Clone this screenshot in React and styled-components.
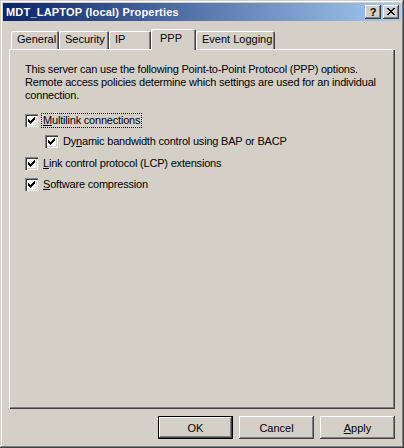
import React from "react";
import styled, { createGlobalStyle, css } from "styled-components";

const Global = createGlobalStyle`
  html, body { margin: 0; padding: 0; background: #D4D0C8; }
  body { font-family: "Liberation Sans", Arial, sans-serif; font-size: 11px; color: #000; }
  * { box-sizing: border-box; }
`;

const raised = css`
  box-shadow: inset -1px -1px 0 #404040, inset 1px 1px 0 #FFFFFF, inset -2px -2px 0 #808080;
`;

const Window = styled.div`
  width: 404px;
  height: 448px;
  background: #D4D0C8;
  padding: 3px;
  display: flex;
  flex-direction: column;
  box-shadow: inset -1px -1px 0 #404040, inset 1px 1px 0 #D4D0C8,
    inset -2px -2px 0 #808080, inset 2px 2px 0 #FFFFFF;
`;

const TitleBar = styled.div`
  height: 18px;
  display: flex;
  align-items: center;
  padding: 0 2px 0 2px;
  background: linear-gradient(to right, #0A246A, #A6CAF0);
`;

const Title = styled.div`
  flex: 1;
  color: #fff;
  font-weight: bold;
  font-size: 11px;
  letter-spacing: 0.2px;
  padding-left: 1px;
`;

const TitleButton = styled.div`
  width: 16px;
  height: 14px;
  background: #D4D0C8;
  ${raised};
  display: flex;
  align-items: center;
  justify-content: center;
  margin-left: ${(p) => p.$gap || 0}px;
  font-weight: bold;
  font-size: 11px;
  line-height: 14px;
  padding-bottom: 1px;
`;

const Body = styled.div`
  flex: 1;
  display: flex;
  flex-direction: column;
  padding: 8px 6px 0 6px;
`;

const TabRow = styled.div`
  display: flex;
  align-items: flex-end;
  height: 20px;
  padding-left: 2px;
  position: relative;
  z-index: 1;
`;

const Tab = styled.div`
  width: ${(p) => p.$w}px;
  height: ${(p) => (p.$active ? 21 : 18)}px;
  margin-bottom: ${(p) => (p.$active ? -1 : 0)}px;
  background: #D4D0C8;
  border-radius: 2px 2px 0 0;
  box-shadow: inset 1px 1px 0 #FFFFFF, inset -1px 0 0 #404040, inset -2px 0 0 #808080;
  padding: ${(p) => (p.$active ? "3px 0 0 9px" : "2px 0 0 6px")};
  line-height: 13px;
  white-space: nowrap;
`;

const Panel = styled.div`
  height: 360px;
  background: #D4D0C8;
  box-shadow: inset 1px 1px 0 #FFFFFF, inset -1px -1px 0 #404040, inset -2px -2px 0 #808080;
  padding: 14px 14px 0 16px;
  display: flex;
  flex-direction: column;
  letter-spacing: -0.2px;
`;

const Intro = styled.p`
  margin: 0 0 10px 0;
  line-height: 13px;
  width: 352px;
`;

const CheckRow = styled.div`
  display: flex;
  align-items: center;
  height: 13px;
  margin-top: ${(p) => p.$mt || 0}px;
  padding-left: ${(p) => p.$indent || 0}px;
`;

const Box = styled.div`
  width: 13px;
  height: 13px;
  background: #fff;
  box-shadow: inset 1px 1px 0 #808080, inset 2px 2px 0 #404040, inset -1px -1px 0 #FFFFFF, inset -2px -2px 0 #D4D0C8;
  display: flex;
  align-items: center;
  justify-content: center;
  flex: none;
`;

const Label = styled.span`
  margin-left: 4px;
  padding: 0 1px;
  line-height: 13px;
  outline: ${(p) => (p.$focus ? "1px dotted #000" : "none")};
  outline-offset: 0px;
  white-space: nowrap;
`;

const U = styled.span`
  text-decoration: underline;
`;

const Footer = styled.div`
  display: flex;
  justify-content: flex-end;
  gap: 6px;
  padding: 7px 0 0 0;
`;

const Button = styled.div`
  width: 75px;
  height: 23px;
  display: flex;
  align-items: center;
  justify-content: center;
  background: #D4D0C8;
  ${(p) =>
    p.$default
      ? css`
          box-shadow: inset 0 0 0 1px #000, inset -2px -2px 0 #404040, inset 2px 2px 0 #FFFFFF,
            inset -3px -3px 0 #808080;
        `
      : raised}
`;

const Check = () => (
  <svg width="7" height="7" viewBox="0 0 7 7" shapeRendering="crispEdges">
    <path
      d="M0 2h1v3h-1z M1 3h1v3h-1z M2 4h1v3h-1z M3 3h1v3h-1z M4 2h1v3h-1z M5 1h1v3h-1z M6 0h1v3h-1z"
      fill="#000"
    />
  </svg>
);

const CloseGlyph = () => (
  <svg width="8" height="7" viewBox="0 0 8 7" shapeRendering="crispEdges">
    <path
      d="M0 0h2v1h-2z M1 1h2v1h-2z M2 2h2v1h-2z M3 3h2v1h-2z M2 4h2v1h-2z M1 5h2v1h-2z M0 6h2v1h-2z M6 0h2v1h-2z M5 1h2v1h-2z M4 2h2v1h-2z M4 4h2v1h-2z M5 5h2v1h-2z M6 6h2v1h-2z"
      fill="#000"
    />
  </svg>
);

const tabs = [
  { label: "General", w: 48 },
  { label: "Security", w: 50 },
  { label: "IP", w: 42 },
  { label: "PPP", w: 45, active: true },
  { label: "Event Logging", w: 79 },
];

export default function App() {
  return (
    <>
      <Global />
      <Window>
        <TitleBar>
          <Title>MDT_LAPTOP (local) Properties</Title>
          <TitleButton>?</TitleButton>
          <TitleButton $gap={2}>
            <CloseGlyph />
          </TitleButton>
        </TitleBar>
        <Body>
          <TabRow>
            {tabs.map((t) => (
              <Tab key={t.label} $w={t.w} $active={t.active}>
                {t.label}
              </Tab>
            ))}
          </TabRow>
          <Panel>
            <Intro>
              This server can use the following Point-to-Point Protocol (PPP) options.
              Remote access policies determine which settings are used for an individual
              connection.
            </Intro>
            <CheckRow $mt={2}>
              <Box>
                <Check />
              </Box>
              <Label $focus>
                <U>M</U>ultilink connections
              </Label>
            </CheckRow>
            <CheckRow $mt={8} $indent={20}>
              <Box>
                <Check />
              </Box>
              <Label>
                Dy<U>n</U>amic bandwidth control using BAP or BACP
              </Label>
            </CheckRow>
            <CheckRow $mt={9}>
              <Box>
                <Check />
              </Box>
              <Label>
                <U>L</U>ink control protocol (LCP) extensions
              </Label>
            </CheckRow>
            <CheckRow $mt={8}>
              <Box>
                <Check />
              </Box>
              <Label>
                <U>S</U>oftware compression
              </Label>
            </CheckRow>
          </Panel>
          <Footer>
            <Button $default>OK</Button>
            <Button>Cancel</Button>
            <Button>
              <U>A</U>pply
            </Button>
          </Footer>
        </Body>
      </Window>
    </>
  );
}
